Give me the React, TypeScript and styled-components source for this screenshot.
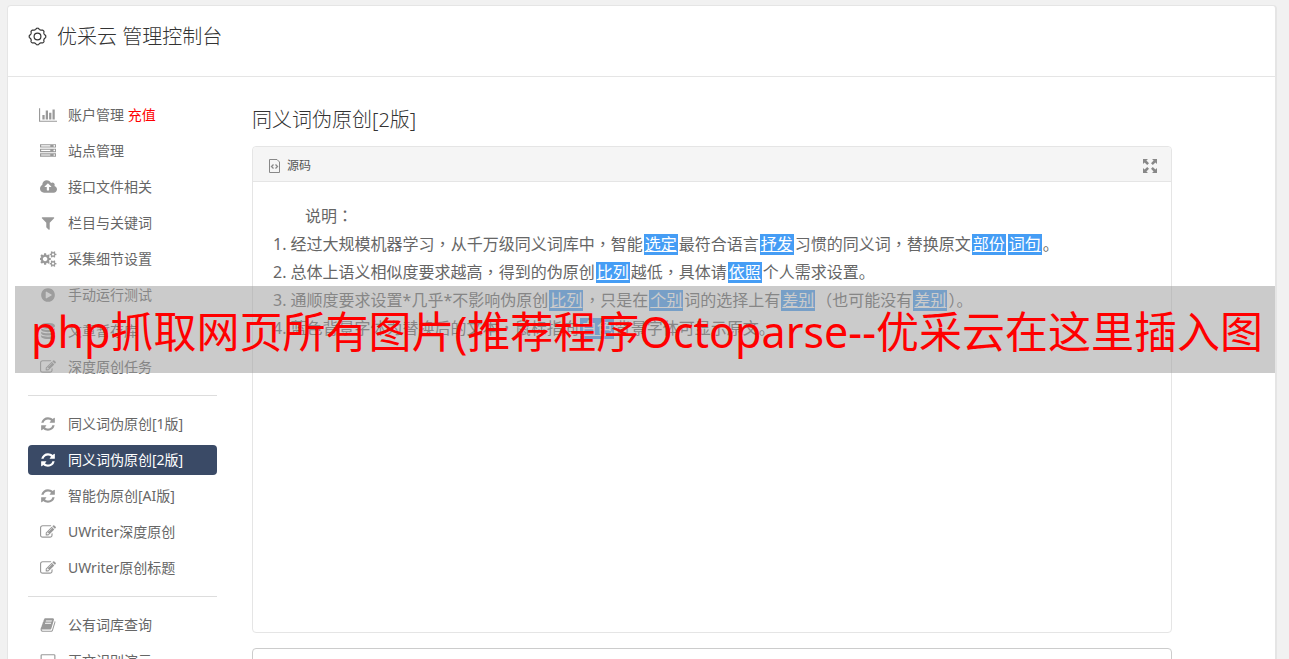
import React from "react";
import styled, { createGlobalStyle, css } from "styled-components";

const GlobalStyle = createGlobalStyle`
  *, *::before, *::after { box-sizing: border-box; }
  html, body { height: 100%; }
  body {
    margin: 0;
    overflow: hidden;
    background: #f1f1f1;
    color: #666;
    font-family: "Noto Sans", "Noto Sans CJK SC", sans-serif;
    font-size: 14px;
    font-weight: 400;
    line-height: 20px;
  }
  #root { height: 100%; }
  a { color: inherit; text-decoration: none; }
`;

const Page = styled.div`
  height: 100%;
  padding: 5px 12px 0 7px;
  overflow: hidden;
`;

const Console = styled.div`
  min-height: 100vh;
  background: #fff;
  border: 1px solid #e5e5e5;
  border-right-width: 2px;
  border-radius: 4px 4px 0 0;
`;

const Header = styled.header`
  display: flex;
  align-items: center;
  gap: 10px;
  height: 71px;
  padding: 0 20px 10px;
  border-bottom: 1px solid #e5e5e5;
  color: #333;
`;

const Title = styled.h1`
  margin: 0;
  padding-top: 2px;
  font-size: 20px;
  font-weight: 300;
  line-height: 28px;
`;

const Body = styled.div`
  display: flex;
  align-items: flex-start;
  gap: 35px;
  padding: 20px 103px 0 20px;
`;

const Sidebar = styled.nav`
  flex: 0 0 189px;
`;

const Menu = styled.ul`
  list-style: none;
  margin: 0;
  padding: 0 0 10px;

  & + & {
    padding-top: 10px;
    border-top: 1px solid #ddd;
  }
`;

const MenuItem = styled.li`
  padding: 3px 0;
`;

const MenuLink = styled.a<{ $active?: boolean }>`
  display: flex;
  align-items: center;
  gap: 10px;
  height: 30px;
  padding: 0 10px;
  border-radius: 4px;
  white-space: nowrap;
  ${(p) =>
    p.$active &&
    css`
      background: #3a4a66;
      color: #fff;
    `}
`;

const IconSlot = styled.span<{ $active?: boolean }>`
  display: flex;
  justify-content: center;
  width: 20px;
  color: ${(p) => (p.$active ? "#fff" : "#999")};
`;

const Recharge = styled.span`
  color: #f00;
`;

const Main = styled.main`
  flex: 1;
  min-width: 0;
  padding-top: 9px;
`;

const SectionTitle = styled.h2`
  margin: 0 0 12px;
  color: #333;
  font-size: 20px;
  font-weight: 300;
  line-height: 28px;
`;

const Editor = styled.section`
  height: 487px;
  margin-bottom: 15px;
  border: 1px solid #e5e5e5;
  border-radius: 4px;
`;

const Toolbar = styled.div`
  display: flex;
  align-items: center;
  justify-content: space-between;
  height: 35px;
  padding: 3px 13px 0 15px;
  background: #f5f5f5;
  border-bottom: 1px solid #e5e5e5;
  border-radius: 4px 4px 0 0;
`;

const ToolButton = styled.button`
  display: flex;
  align-items: center;
  gap: 6px;
  margin: 0;
  padding: 0;
  border: 0;
  background: none;
  color: #555;
  font: inherit;
  font-size: 12px;
`;

const Content = styled.div`
  padding: 20px;
  font-size: 16px;
  line-height: 28px;
  white-space: nowrap;
`;

const Line = styled.p<{ $indent?: boolean }>`
  margin: 0;
  padding-left: ${(p) => (p.$indent ? 32 : 0)}px;
`;

const Word = styled.u`
  display: inline-block;
  margin: 0 1px;
  padding: 0 1px;
  background: #459df5;
  color: #fff;
  line-height: 21px;
`;

const Mark = styled.span`
  font-family: "Noto Sans CJK TC", sans-serif;
  line-height: 1;
`;

const SourceInput = styled.textarea`
  display: block;
  width: 100%;
  height: 200px;
  border: 1px solid #ccc;
  border-radius: 4px;
  background: #fff;
  resize: none;
`;

const Banner = styled.div`
  position: absolute;
  top: 286px;
  left: 15px;
  right: 14px;
  height: 87px;
  padding-left: 16px;
  overflow: hidden;
  background: rgba(160, 160, 160, 0.55);
  color: #f00;
  font-size: 43px;
  font-weight: 400;
  line-height: 92px;
  white-space: nowrap;
`;

type Glyph = { box: string; width: number; d: string };

const glyphs: Record<string, Glyph> = {
  chart: {
    box: "0 0 2048 1792",
    width: 18,
    d: "M640 896v512h-256v-512h256zm384-512v1024h-256v-1024h256zm1024 1152v128h-2048v-1536h128v1408h1920zm-640-896v768h-256v-768h256zm384-384v1152h-256v-1152h256z",
  },
  server: {
    box: "0 0 1792 1792",
    width: 16,
    d: "M128 1408h1024v-128h-1024v128zm0-512h1024v-128h-1024v128zm1568 448q0-40-28-68t-68-28-68 28-28 68 28 68 68 28 68-28 28-68zm-1568-960h1024v-128h-1024v128zm1568 448q0-40-28-68t-68-28-68 28-28 68 28 68 68 28 68-28 28-68zm0-512q0-40-28-68t-68-28-68 28-28 68 28 68 68 28 68-28 28-68zm96 832v384h-1792v-384h1792zm0-512v384h-1792v-384h1792zm0-512v384h-1792v-384h1792z",
  },
  cloud: {
    box: "-64 0 1920 1792",
    width: 17,
    d: "M1216 864q0-14-9-23l-352-352q-9-9-23-9t-23 9l-351 351q-10 12-10 24 0 14 9 23t23 9h224v352q0 13 9.5 22.5t22.5 9.5h192q13 0 22.5-9.5t9.5-22.5v-352h224q13 0 22.5-9.5t9.5-22.5zm640 288q0 159-112.5 271.5t-271.5 112.5h-1088q-185 0-316.5-131.5t-131.5-316.5q0-130 70-240t188-165q-2-30-2-43 0-212 150-362t362-150q156 0 285.5 87t188.5 231q71-62 166-62 106 0 181 75t75 181q0 76-41 138 130 31 213.5 135.5t83.5 238.5z",
  },
  filter: {
    box: "0 0 1792 1792",
    width: 16,
    d: "M1595 295q17 41-14 70l-493 493v742q0 42-39 59-13 5-25 5-27 0-45-19l-256-256q-19-19-19-45v-486l-493-493q-31-29-14-70 17-39 59-39h1280q42 0 59 39z",
  },
  cogs: {
    box: "0 0 1920 1792",
    width: 17,
    d: "M832 896q0-106-75-181t-181-75-181 75-75 181 75 181 181 75 181-75 75-181zm768 512q0-52-38-90t-90-38-90 38-38 90q0 53 37.5 90.5t90.5 37.5 90.5-37.5 37.5-90.5zm0-1024q0-52-38-90t-90-38-90 38-38 90q0 53 37.5 90.5t90.5 37.5 90.5-37.5 37.5-90.5zm-384 421v185q0 10-7 19.5t-16 10.5l-155 24q-11 35-32 76 34 48 90 115 7 11 7 20 0 12-7 19-23 30-82.5 89.5t-78.5 59.5q-11 0-21-7l-115-90q-37 19-77 31-11 108-23 155-7 24-30 24h-186q-11 0-20-7.5t-10-17.5l-23-153q-34-10-75-31l-118 89q-7 7-20 7-11 0-21-8-144-133-144-160 0-9 7-19 10-14 41-53t47-61q-23-44-35-82l-152-24q-10-1-17-9.5t-7-19.5v-185q0-10 7-19.5t16-10.5l155-24q11-35 32-76-34-48-90-115-7-11-7-20 0-12 7-20 22-30 82-89t79-59q11 0 21 7l115 90q34-18 77-32 11-108 23-154 7-24 30-24h186q11 0 20 7.5t10 17.5l23 153q34 10 75 31l118-89q8-7 20-7 11 0 21 8 144 133 144 160 0 8-7 19-12 16-42 54t-45 60q23 48 34 82l152 23q10 2 17 10.5t7 19.5zm640 533v140q0 16-149 31-12 27-30 52 51 113 51 138 0 4-4 7-122 71-124 71-8 0-46-47t-52-68q-20 2-30 2t-30-2q-14 21-52 68t-46 47q-2 0-124-71-4-3-4-7 0-25 51-138-18-25-30-52-149-15-149-31v-140q0-16 149-31 13-29 30-52-51-113-51-138 0-4 4-7 4-2 35-20t59-34 30-16q8 0 46 46.5t52 67.5q20-2 30-2t30 2q51-71 92-112l6-2q4 0 124 70 4 3 4 7 0 25-51 138 17 23 30 52 149 15 149 31zm0-1024v140q0 16-149 31-12 27-30 52 51 113 51 138 0 4-4 7-122 71-124 71-8 0-46-47t-52-68q-20 2-30 2t-30-2q-14 21-52 68t-46 47q-2 0-124-71-4-3-4-7 0-25 51-138-18-25-30-52-149-15-149-31v-140q0-16 149-31 13-29 30-52-51-113-51-138 0-4 4-7 4-2 35-20t59-34 30-16q8 0 46 46.5t52 67.5q20-2 30-2t30 2q51-71 92-112l6-2q4 0 124 70 4 3 4 7 0 25-51 138 17 23 30 52 149 15 149 31z",
  },
  play: {
    box: "0 0 1792 1792",
    width: 16,
    d: "M896 128q209 0 385.5 103t279.5 279.5 103 385.5-103 385.5-279.5 279.5-385.5 103-385.5-103-279.5-279.5-103-385.5 103-385.5 279.5-279.5 385.5-103zm384 823q32-18 32-55t-32-55l-544-320q-31-19-64-1-32 19-32 56v640q0 37 32 56 16 8 32 8 17 0 32-9z",
  },
  database: {
    box: "0 0 1792 1792",
    width: 16,
    d: "M896 768q237 0 443-43t325-127v170q0 69-103 128t-280 93.5-385 34.5-385-34.5-280-93.5-103-128v-170q119 84 325 127t443 43zm0 768q237 0 443-43t325-127v170q0 69-103 128t-280 93.5-385 34.5-385-34.5-280-93.5-103-128v-170q119 84 325 127t443 43zm0-384q237 0 443-43t325-127v170q0 69-103 128t-280 93.5-385 34.5-385-34.5-280-93.5-103-128v-170q119 84 325 127t443 43zm0-1152q208 0 385 34.5t280 93.5 103 128v128q0 69-103 128t-280 93.5-385 34.5-385-34.5-280-93.5-103-128v-128q0-69 103-128t280-93.5 385-34.5z",
  },
  edit: {
    box: "0 0 1792 1792",
    width: 16,
    d: "M888 1184l116-116-152-152-116 116v56h96v96h56zm440-720q-16-16-33 1l-350 350q-17 17-1 33t33-1l350-350q17-17 1-33zm80 594v190q0 119-84.5 203.5t-203.5 84.5h-832q-119 0-203.5-84.5t-84.5-203.5v-832q0-119 84.5-203.5t203.5-84.5h832q63 0 117 25 15 7 18 23 3 17-9 29l-49 49q-14 14-32 8-23-6-45-6h-832q-66 0-113 47t-47 113v832q0 66 47 113t113 47h832q66 0 113-47t47-113v-126q0-13 9-22l64-64q15-15 35-7t20 29zm-96-738l288 288-672 672h-288v-288zm444 132l-92 92-288-288 92-92q28-28 68-28t68 28l152 152q28 28 28 68t-28 68z",
  },
  refresh: {
    box: "0 0 1792 1792",
    width: 16,
    d: "M1639 1056q0 5-1 7-64 268-268 434.5t-478 166.5q-146 0-282.5-55t-243.5-157l-129 129q-19 19-45 19t-45-19-19-45v-448q0-26 19-45t45-19h448q26 0 45 19t19 45-19 45l-137 137q71 66 161 102t187 36q134 0 250-65t186-179q11-17 53-117 8-23 30-23h192q13 0 22.5 9.5t9.5 22.5zm25-800v448q0 26-19 45t-45 19h-448q-26 0-45-19t-19-45 19-45l138-138q-148-137-349-137-134 0-250 65t-186 179q-11 17-53 117-8 23-30 23h-199q-13 0-22.5-9.5t-9.5-22.5v-7q65-268 270-434.5t480-166.5q146 0 284 55.5t245 156.5l130-129q19-19 45-19t45 19 19 45z",
  },
  book: {
    box: "0 0 1792 1792",
    width: 16,
    d: "M1703 478q40 57 18 129l-275 906q-19 64-76.5 107.5t-122.5 43.5h-923q-77 0-148.5-53.5t-99.5-131.5q-24-67-2-127 0-4 3-27t4-37q1-8-3-21.5t-3-19.5q2-11 8-21t16.5-23.5 16.5-23.5q23-38 45-91.5t30-91.5q3-10 .5-30t-.5-28q3-11 17-28t17-23q21-36 42-92t25-90q1-9-2.5-32t.5-28q4-13 22-30.5t22-22.5q19-26 42.5-84.5t27.5-96.5q1-8-3-25.5t-2-26.5q2-8 9-18t18-23 17-21q8-12 16.5-30.5t15-35 16-36 19.5-32 26.5-23.5 36-11.5 47.5 5.5l-1 3q38-9 51-9h761q74 0 114 56t18 130l-274 906q-36 119-71.5 153.5t-128.5 34.5h-869q-27 0-38 15-11 16-1 43 24 70 144 70h923q29 0 56-15.5t35-41.5l300-987q7-22 5-57 38 15 59 43zm-1064 2q-4 13 2 22.5t20 9.5h608q13 0 25.5-9.5t16.5-22.5l21-64q4-13-2-22.5t-20-9.5h-608q-13 0-25.5 9.5t-16.5 22.5zm-83 256q-4 13 2 22.5t20 9.5h608q13 0 25.5-9.5t16.5-22.5l21-64q4-13-2-22.5t-20-9.5h-608q-13 0-25.5 9.5t-16.5 22.5z",
  },
  laptop: {
    box: "0 0 1792 1792",
    width: 18,
    d: "M224 128h1344q66 0 113 47t47 113v832q0 66-47 113t-113 47h-1344q-66 0-113-47t-47-113v-832q0-66 47-113t113-47zm0 128q-32 0-32 32v832q0 32 32 32h1344q32 0 32-32v-832q0-32-32-32z",
  },
};

const Icon = ({ name }: { name: string }) => {
  const g = glyphs[name];
  return (
    <svg width={g.width} height="16" viewBox={g.box} fill="currentColor" fillRule="evenodd" aria-hidden="true">
      <path d={g.d} />
    </svg>
  );
};

// Outline of a cog with rounded teeth, traced as a radial wave.
const cogOutline = (() => {
  const points: string[] = [];
  for (let i = 0; i < 160; i++) {
    const a = (i / 160) * Math.PI * 2;
    const r = 7.7 + 0.6 * Math.tanh(2 * Math.cos(8 * a));
    points.push(`${(9.5 + r * Math.cos(a)).toFixed(2)} ${(9.5 + r * Math.sin(a)).toFixed(2)}`);
  }
  return `M${points.join("L")}Z`;
})();

const CogIcon = () => (
  <svg width="19" height="19" viewBox="0 0 19 19" fill="none" stroke="currentColor" strokeWidth="1.2" aria-hidden="true">
    <path d={cogOutline} />
    <circle cx="9.5" cy="9.5" r="3.4" />
  </svg>
);

const SourceIcon = () => (
  <svg width="13" height="16" viewBox="0 0 13 16" fill="none" stroke="#888" aria-hidden="true">
    <path d="M1.5 1.5H9L11.5 4V14.5H1.5Z" />
    <path d="M5.5 6.5L3.5 8.5L5.5 10.5M7.5 6.5L9.5 8.5L7.5 10.5" strokeWidth="1.3" />
  </svg>
);

const ExpandIcon = () => (
  <svg width="16" height="16" viewBox="0 0 16 16" fill="#888" aria-hidden="true">
    {[0, 90, 180, 270].map((turn) => (
      <path key={turn} transform={`rotate(${turn} 8 8)`} d="M1 1H6L4.4 2.6L7 5.2L5.2 7L2.6 4.4L1 6Z" />
    ))}
  </svg>
);

// Sets full-width commas, colons and brackets in the middle of their cells.
const Prose = ({ children }: { children: string }) => (
  <>
    {children.split(/([，：（）])/).map((part, i) => (i % 2 ? <Mark key={i}>{part}</Mark> : part))}
  </>
);

type Entry = { icon: string; label: string; extra?: string; active?: boolean };

const menus: Entry[][] = [
  [
    { icon: "chart", label: "账户管理", extra: "充值" },
    { icon: "server", label: "站点管理" },
    { icon: "cloud", label: "接口文件相关" },
    { icon: "filter", label: "栏目与关键词" },
    { icon: "cogs", label: "采集细节设置" },
    { icon: "play", label: "手动运行测试" },
    { icon: "database", label: "文章暂存库" },
    { icon: "edit", label: "深度原创任务" },
  ],
  [
    { icon: "refresh", label: "同义词伪原创[1版]" },
    { icon: "refresh", label: "同义词伪原创[2版]", active: true },
    { icon: "refresh", label: "智能伪原创[AI版]" },
    { icon: "edit", label: "UWriter深度原创" },
    { icon: "edit", label: "UWriter原创标题" },
  ],
  [
    { icon: "book", label: "公有词库查询" },
    { icon: "laptop", label: "正文识别演示" },
  ],
];

// Replaced words stand between bars.
const lines = [
  "1. 经过大规模机器学习，从千万级同义词库中，智能|选定|最符合语言|抒发|习惯的同义词，替换原文|部份||词句|。",
  "2. 总体上语义相似度要求越高，得到的伪原创|比列|越低，具体请|依照|个人需求设置。",
  "3. 通顺度要求设置*几乎*不影响伪原创|比列|，只是在|个别|词的选择上有|差别|（也可能没有|差别|）。",
  "4. 蓝色背景字体为替换后的文本，鼠标指向|白色|背景字体可显示原文。",
];

export default function App() {
  return (
    <Page>
      <GlobalStyle />
      <Console>
        <Header>
          <CogIcon />
          <Title>优采云 管理控制台</Title>
        </Header>
        <Body>
          <Sidebar>
            {menus.map((entries, i) => (
              <Menu key={i}>
                {entries.map((e) => (
                  <MenuItem key={e.label}>
                    <MenuLink href="#" $active={e.active}>
                      <IconSlot $active={e.active}>
                        <Icon name={e.icon} />
                      </IconSlot>
                      <span>
                        {e.label}
                        {e.extra && <Recharge> {e.extra}</Recharge>}
                      </span>
                    </MenuLink>
                  </MenuItem>
                ))}
              </Menu>
            ))}
          </Sidebar>
          <Main>
            <SectionTitle>同义词伪原创[2版]</SectionTitle>
            <Editor>
              <Toolbar>
                <ToolButton type="button">
                  <SourceIcon />
                  源码
                </ToolButton>
                <ToolButton type="button" aria-label="全屏">
                  <ExpandIcon />
                </ToolButton>
              </Toolbar>
              <Content>
                <Line $indent>
                  <Prose>说明：</Prose>
                </Line>
                {lines.map((line) => (
                  <Line key={line}>
                    {line
                      .split("|")
                      .map((part, i) => (i % 2 ? <Word key={i}>{part}</Word> : <Prose key={i}>{part}</Prose>))}
                  </Line>
                ))}
              </Content>
            </Editor>
            <SourceInput aria-label="原文" />
          </Main>
        </Body>
      </Console>
      <Banner>php抓取网页所有图片(推荐程序Octoparse--优采云在这里插入图</Banner>
    </Page>
  );
}
